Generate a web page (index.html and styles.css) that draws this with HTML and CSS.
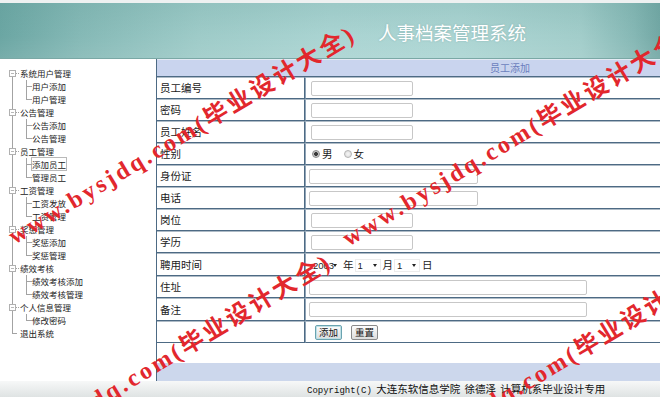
FILE: index.html
```html
<!DOCTYPE html>
<html lang="zh-CN">
<head>
<meta charset="utf-8">
<title>人事档案管理系统</title>
<link rel="stylesheet" href="styles.css">
</head>
<body>
<div class="page">
  <header class="top">
    <h1 class="title">人事档案管理系统</h1>
  </header>
  <div class="body">
    <nav class="side">
      <ul class="tree">
        <li class="root"><span class="label">系统用户管理</span>
          <ul class="sub"><li>用户添加</li><li>用户管理</li></ul>
        </li>
        <li class="root"><span class="label">公告管理</span>
          <ul class="sub"><li>公告添加</li><li>公告管理</li></ul>
        </li>
        <li class="root"><span class="label">员工管理</span>
          <ul class="sub"><li><span class="current">添加员工</span></li><li>管理员工</li></ul>
        </li>
        <li class="root"><span class="label">工资管理</span>
          <ul class="sub"><li>工资发放</li><li>工资管理</li></ul>
        </li>
        <li class="root"><span class="label">奖惩管理</span>
          <ul class="sub"><li>奖惩添加</li><li>奖惩管理</li></ul>
        </li>
        <li class="root"><span class="label">绩效考核</span>
          <ul class="sub"><li>绩效考核添加</li><li>绩效考核管理</li></ul>
        </li>
        <li class="root"><span class="label">个人信息管理</span>
          <ul class="sub"><li>修改密码</li></ul>
        </li>
        <li class="root leaf"><span class="label">退出系统</span></li>
      </ul>
    </nav>
    <main class="main">
      <table class="form">
        <tr class="head"><td colspan="2">员工添加</td></tr>
        <tr><td class="lab">员工编号</td><td class="val"><input class="txt short" type="text"></td></tr>
        <tr><td class="lab">密码</td><td class="val"><input class="txt short" type="password"></td></tr>
        <tr><td class="lab">员工姓名</td><td class="val"><input class="txt short" type="text"></td></tr>
        <tr><td class="lab">性别</td><td class="val"><label class="opt"><input class="rad" type="radio" name="sex" checked>男</label><label class="opt"><input class="rad" type="radio" name="sex">女</label></td></tr>
        <tr><td class="lab">身份证</td><td class="val"><input class="txt mid" type="text"></td></tr>
        <tr><td class="lab">电话</td><td class="val"><input class="txt mid" type="text"></td></tr>
        <tr><td class="lab">岗位</td><td class="val"><input class="txt short" type="text"></td></tr>
        <tr><td class="lab">学历</td><td class="val"><input class="txt short" type="text"></td></tr>
        <tr class="tall"><td class="lab">聘用时间</td><td class="val">
          <span class="selwrap year"><select class="sel"><option>2003</option></select></span><span class="unit">年</span><span class="selwrap"><select class="sel"><option>1</option></select></span><span class="unit">月</span><span class="selwrap"><select class="sel"><option>1</option></select></span><span class="unit">日</span>
        </td></tr>
        <tr><td class="lab">住址</td><td class="val"><input class="txt long" type="text"></td></tr>
        <tr class="tall"><td class="lab">备注</td><td class="val"><input class="txt long" type="text"></td></tr>
        <tr><td class="lab"></td><td class="val"><button class="btn primary" type="button">添加</button><button class="btn" type="button">重置</button></td></tr>
      </table>
      <div class="gap"></div>
      <div class="band"></div>
    </main>
  </div>
  <footer class="foot"><span class="mono">Copyright(C)</span> 大连东软信息学院 徐德泽 计算机系毕业设计专用</footer>
  <div class="wm" aria-hidden="true">
    <span class="mark m1">www.bysjdq.com(毕业设计大全)</span>
    <span class="mark m2">www.bysjdq.com(毕业设计大全)</span>
    <span class="mark m3">www.bysjdq.com(毕业设计大全)</span>
    <span class="mark m4">www.bysjdq.com(毕业设计大全)</span>
  </div>
</div>
</body>
</html>
```
FILE: styles.css
```css
html, body {
  margin: 0;
  padding: 0;
  overflow: hidden;
  background: #fff;
}
body {
  font-family: "Noto Sans CJK SC", "Liberation Sans", sans-serif;
  color: #1a1a1a;
}
.page {
  position: relative;
  width: 660px;
  height: 397px;
  overflow: hidden;
}

/* header */
.top {
  height: 55px;
  border-top: 3px solid #eef1f1;
  border-bottom: 1px solid #7aa8a5;
  background:
    linear-gradient(180deg, rgba(90,150,146,0.18) 0%, rgba(255,255,255,0) 60%, rgba(255,255,255,0.08) 100%),
    linear-gradient(90deg, #6ba6a3 0%, #85b9b6 12%, #9ecbc8 30%, #aad4d2 50%, #acd5d3 70%, #a2cdca 88%, #86b8b5 96%, #72a7a4 100%);
  box-sizing: content-box;
}
.title {
  margin: 0;
  padding: 19px 0 0 378px;
  font-family: "Noto Sans CJK SC", sans-serif;
  font-weight: 400;
  font-size: 18.5px;
  line-height: 20px;
  color: #fff;
  letter-spacing: 0;
  text-shadow: 0 0 2px rgba(60,110,108,0.35);
}

/* layout */
.body {
  display: flex;
  height: 322px;
}
.side {
  flex: none;
  width: 156px;
  background: #fff;
}
.main {
  flex: none;
  width: 706px;
  border-left: 1px solid #4d6a84;
  display: flex;
  flex-direction: column;
}

/* tree */
.tree {
  position: relative;
  margin: 0;
  padding: 8px 0 0 0;
  list-style: none;
  font-size: 8.5px;
  line-height: 13px;
  color: #222;
}
.tree::before {
  content: "";
  position: absolute;
  left: 12px;
  top: 15px;
  bottom: 7px;
  border-left: 1px solid #a3a3a3;
}
.tree li { list-style: none; }
.root > .label {
  display: block;
  position: relative;
  padding-left: 20px;
}
.root > .label::before {
  content: "";
  position: absolute;
  left: 9px;
  top: 3px;
  width: 5px;
  height: 5px;
  border: 1px solid #b0b0b0;
  background: linear-gradient(#b8b8b8, #b8b8b8) center / 3px 1px no-repeat, #fff;
}
.root > .label::after {
  content: "";
  position: absolute;
  left: 16px;
  top: 6px;
  width: 3px;
  border-top: 1px dotted #a3a3a3;
}
.root.leaf > .label::before {
  left: 12px;
  top: 0;
  width: 5px;
  height: 6px;
  border: 0;
  border-bottom: 1px solid #a3a3a3;
  background: none;
}
.root.leaf > .label::after { display: none; }
.sub {
  margin: 0;
  padding: 0;
}
.sub li {
  position: relative;
  padding-left: 32px;
}
.sub li::before {
  content: "";
  position: absolute;
  left: 26px;
  top: 0;
  width: 5px;
  height: 6px;
  border-left: 1px solid #a3a3a3;
  border-bottom: 1px solid #a3a3a3;
}
.sub li:not(:last-child)::after {
  content: "";
  position: absolute;
  left: 26px;
  top: 7px;
  bottom: 0;
  border-left: 1px solid #a3a3a3;
}
.current {
  outline: 1px solid #b9b9b9;
  outline-offset: 0;
}

/* form table */
.form {
  border-collapse: separate;
  border-spacing: 0;
  width: 706px;
  font-size: 10.5px;
}
.form td {
  padding: 0;
  border-top: 1px solid #aebbc6;
  border-bottom: 1px solid #4d6a84;
  height: 20px;
  vertical-align: middle;
}
.form tr.tall td { height: 21px; }
.form .head td {
  height: 16px;
  border-top: 1px solid #e4eaf4;
  background: #c9d4ee;
  color: #6b7ebd;
  text-align: center;
  font-size: 10px;
  line-height: 16px;
  padding-left: 0;
}
.lab {
  width: 144px;
  padding-left: 3px !important;
  border-right: 1px solid #4d6a84;
  line-height: 14px;
}
.val {
  border-left: 1px solid #90a4b6;
  padding-left: 3px !important;
  line-height: 14px;
}
.txt {
  box-sizing: border-box;
  height: 15px;
  margin: 0;
  padding: 0 2px;
  border: 1px solid #c7c7c7;
  border-radius: 2px;
  background: #fff;
  vertical-align: middle;
  font-size: 10px;
}
.short { width: 102px; margin-left: 2px; }
.mid { width: 169px; }
.long { width: 278px; }

.opt {
  display: inline-flex;
  align-items: center;
  margin-left: 3px;
  margin-right: 8px;
  font-size: 10.5px;
}
.rad {
  appearance: none;
  -webkit-appearance: none;
  width: 8px;
  height: 8px;
  margin: 0 2px 0 0;
  border: 1px solid #b4b4b4;
  border-radius: 50%;
  background: radial-gradient(circle, #f6f6f6 0, #d8d8d8 100%);
  box-sizing: border-box;
}
.rad:checked {
  background: radial-gradient(circle, #3a3a3a 0 1.6px, #bdbdbd 2.2px, #e6e6e6 100%);
  border-color: #8c8c8c;
}

.selwrap {
  position: relative;
  display: inline-block;
  width: 26px;
  height: 13px;
  vertical-align: middle;
  border: 1px solid #ececec;
  box-sizing: border-box;
}
.selwrap.year { width: 31px; margin-left: 1px; border-color: #fff; }
.selwrap::after {
  content: "";
  position: absolute;
  right: 3px;
  top: 4px;
  border-left: 2.5px solid transparent;
  border-right: 2.5px solid transparent;
  border-top: 3px solid #222;
}
.sel {
  appearance: none;
  -webkit-appearance: none;
  border: 0;
  background: transparent;
  margin: 0;
  padding: 0 0 0 2px;
  width: 100%;
  height: 11px;
  font-family: "Liberation Sans", sans-serif;
  font-size: 9.5px;
  line-height: 11px;
  color: #222;
  display: block;
}
.unit {
  display: inline-block;
  vertical-align: middle;
  font-size: 10.5px;
  margin: 0 1px 0 2px;
}

.btn {
  height: 15px;
  margin: 0;
  padding: 0 3px;
  font-family: "Noto Sans CJK SC", sans-serif;
  font-size: 9.5px;
  line-height: 12px;
  color: #111;
  border: 1px solid #8a8a8a;
  border-radius: 2px;
  background: linear-gradient(#fdfdfd, #dcdcdc);
  vertical-align: middle;
}
.btn.primary {
  margin-left: 6px;
  margin-right: 9px;
  border-color: #6aa3b0;
  box-shadow: inset 0 0 0 1px #bfe0e6;
}

.gap {
  height: 20px;
  background: #fff;
}
.band {
  height: 18px;
  background: #ccd7ec;
}

/* footer */
.foot {
  height: 16px;
  line-height: 16px;
  padding-left: 307px;
  background: linear-gradient(#f7f8f8, #dfe3e3);
  font-size: 10.5px;
  word-spacing: 2px;
  color: #111;
  white-space: nowrap;
}
.mono {
  font-family: "Liberation Mono", monospace;
  font-size: 9px;
  word-spacing: 0;
}

/* watermark overlay */
.wm {
  position: absolute;
  left: 0;
  top: 0;
  width: 660px;
  height: 397px;
  overflow: hidden;
  pointer-events: none;
}
.mark {
  position: absolute;
  white-space: nowrap;
  font-family: "Liberation Serif", "Noto Sans CJK SC", serif;
  font-weight: 700;
  font-size: 24px;
  line-height: 26px;
  letter-spacing: 3px;
  color: #e2272d;
  transform: rotate(-31deg);
  transform-origin: 0 20px;
}
.m1 { left: 14px; top: 224px; }
.m2 { left: 348px; top: 226px; }
.m3 { left: -10px; top: 452px; }
.m4 { left: 385px; top: 455px; }
```
